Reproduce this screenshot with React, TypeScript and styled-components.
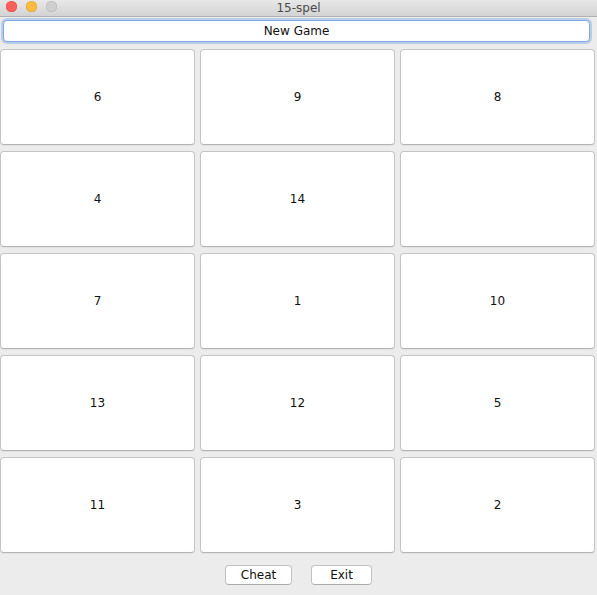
import * as React from 'react'
import styled, { createGlobalStyle } from 'styled-components'

const GlobalStyle = createGlobalStyle`
  html, body {
    margin: 0;
    padding: 0;
    background: #ececec;
  }
  body {
    font-family: "DejaVu Sans", "Noto Sans", sans-serif;
    color: #1a1a1a;
  }
`

const Window = styled.div`
  width: 597px;
  height: 595px;
  background: #ececec;
  display: flex;
  flex-direction: column;
  overflow: hidden;
`

const TitleBar = styled.div`
  position: relative;
  height: 16px;
  flex: none;
  background: linear-gradient(to bottom, #e8e8e8, #d3d3d3);
  border-bottom: 1px solid #b1b1b1;
  display: flex;
  align-items: center;
  justify-content: center;
`

const Lights = styled.div`
  position: absolute;
  left: 6px;
  top: 1px;
  display: flex;
  gap: 9px;
`

const Light = styled.span<{ $color: string; $edge: string }>`
  width: 11px;
  height: 11px;
  border-radius: 50%;
  background: ${({ $color }) => $color};
  box-shadow: inset 0 0 0 0.5px ${({ $edge }) => $edge};
`

const Title = styled.span`
  font-size: 12px;
  color: #4a4a4a;
  line-height: 16px;
`

const NewGameButton = styled.button`
  margin: 3px 7px 0 3px;
  height: 22px;
  flex: none;
  background: #fff;
  border: 1px solid #7ea8e3;
  border-radius: 4px;
  box-shadow: 0 0 0 2px rgba(126, 168, 227, 0.45);
  font-family: inherit;
  font-size: 12px;
  color: #111;
  padding: 0;
`

const Board = styled.div`
  margin-top: 7px;
  width: 595px;
  display: grid;
  grid-template-columns: repeat(3, 1fr);
  grid-auto-rows: 96px;
  column-gap: 5px;
  row-gap: 6px;
`

const Tile = styled.button`
  background: #fff;
  border: 1px solid #c4c4c4;
  border-bottom-color: #b3b3b3;
  border-radius: 4px;
  font-family: inherit;
  font-size: 12px;
  color: #111;
  padding: 0;
  box-shadow: 0 1px 0 rgba(0, 0, 0, 0.04);
`

const Footer = styled.div`
  margin-top: 12px;
  display: flex;
  justify-content: center;
  gap: 19px;
`

const SmallButton = styled.button<{ $width: number }>`
  width: ${({ $width }) => $width}px;
  height: 20px;
  background: #fff;
  border: 1px solid #c2c2c2;
  border-bottom-color: #acacac;
  border-radius: 4px;
  font-family: inherit;
  font-size: 12px;
  color: #111;
  padding: 0;
`

const tiles = ['6', '9', '8', '4', '14', '', '7', '1', '10', '13', '12', '5', '11', '3', '2']

export default function App() {
  return (
    <Window>
      <GlobalStyle />
      <TitleBar>
        <Lights>
          <Light $color="#fc605c" $edge="#de4b45" />
          <Light $color="#fdbc40" $edge="#dea033" />
          <Light $color="#cfcfcf" $edge="#b5b5b5" />
        </Lights>
        <Title>15-spel</Title>
      </TitleBar>
      <NewGameButton>New Game</NewGameButton>
      <Board>
        {tiles.map((t, i) => (
          <Tile key={i}>{t}</Tile>
        ))}
      </Board>
      <Footer>
        <SmallButton $width={67}>Cheat</SmallButton>
        <SmallButton $width={61}>Exit</SmallButton>
      </Footer>
    </Window>
  )
}
